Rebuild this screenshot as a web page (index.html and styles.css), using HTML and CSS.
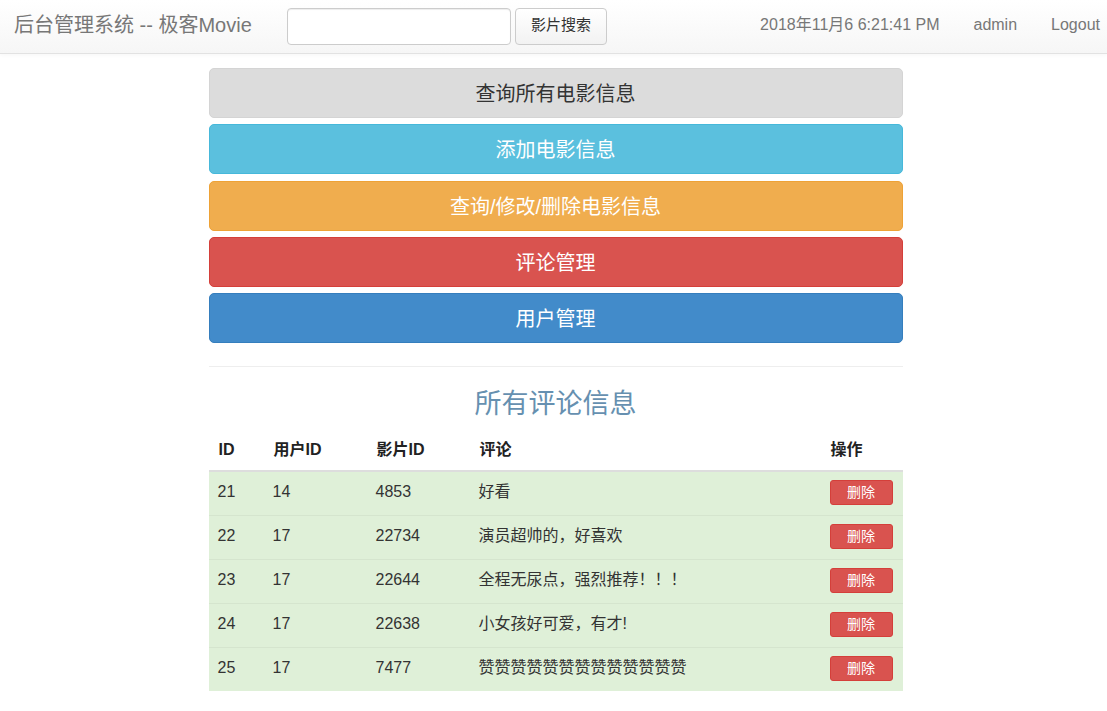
FILE: index.html
```html
<!DOCTYPE html>
<html lang="zh">
<head>
<meta charset="utf-8">
<title>后台管理系统</title>
<link rel="stylesheet" href="styles.css">
</head>
<body>
<nav class="navbar">
  <div class="brand">后台管理系统 -- 极客Movie</div>
  <form class="search">
    <input class="search-input" type="text">
    <button class="search-btn" type="button">影片搜索</button>
  </form>
  <div class="nav-right">
    <span class="nav-item">2018年11月6 6:21:41 PM</span>
    <span class="nav-item">admin</span>
    <span class="nav-item">Logout</span>
  </div>
</nav>
<main class="main">
  <div class="menu">
    <button class="big-btn btn-default">查询所有电影信息</button>
    <button class="big-btn btn-info">添加电影信息</button>
    <button class="big-btn btn-warning">查询/修改/删除电影信息</button>
    <button class="big-btn btn-danger">评论管理</button>
    <button class="big-btn btn-primary">用户管理</button>
  </div>
  <hr class="divider">
  <h2 class="title">所有评论信息</h2>
  <table class="table">
    <thead>
      <tr><th class="c1">ID</th><th class="c2">用户ID</th><th class="c3">影片ID</th><th class="c4">评论</th><th class="c5">操作</th></tr>
    </thead>
    <tbody>
      <tr><td>21</td><td>14</td><td>4853</td><td>好看</td><td><button class="del">删除</button></td></tr>
      <tr><td>22</td><td>17</td><td>22734</td><td>演员超帅的，好喜欢</td><td><button class="del">删除</button></td></tr>
      <tr><td>23</td><td>17</td><td>22644</td><td>全程无尿点，强烈推荐！！！</td><td><button class="del">删除</button></td></tr>
      <tr><td>24</td><td>17</td><td>22638</td><td>小女孩好可爱，有才!</td><td><button class="del">删除</button></td></tr>
      <tr><td>25</td><td>17</td><td>7477</td><td>赞赞赞赞赞赞赞赞赞赞赞赞赞</td><td><button class="del">删除</button></td></tr>
    </tbody>
  </table>
</main>
</body>
</html>
```
FILE: styles.css
```css
* { box-sizing: border-box; }
html, body { margin: 0; padding: 0; }
body {
  font-family: "Liberation Sans", Arial, "Noto Sans CJK SC", sans-serif;
  font-size: 15px;
  color: #333;
  background: #fff;
}
.navbar {
  display: flex;
  align-items: center;
  height: 54px;
  padding: 0 7px 0 14px;
  background: linear-gradient(to bottom, #ffffff 0%, #f6f6f6 100%);
  border-bottom: 1px solid #e2e2e2;
  box-shadow: 0 1px 4px rgba(0,0,0,0.04);
}
.brand {
  font-size: 20px;
  line-height: 24px;
  color: #777;
  width: 273px;
  white-space: nowrap;
  margin-bottom: 4px;
}
.search { display: flex; gap: 4px; margin: 0; }
.search-input {
  width: 224px;
  height: 37px;
  border: 1px solid #ccc;
  border-radius: 4px;
  box-shadow: inset 0 1px 1px rgba(0,0,0,0.075);
  background: #fff;
}
.search-btn {
  width: 92px;
  height: 37px;
  border: 1px solid #ccc;
  border-radius: 4px;
  background: linear-gradient(to bottom, #fff 0%, #f2f2f2 100%);
  font-family: "Liberation Sans", "Noto Sans CJK SC", sans-serif;
  font-size: 15px;
  line-height: 20px;
  color: #333;
  padding: 0 0 3px;
}
.nav-right {
  margin-left: auto;
  display: flex;
  align-items: center;
  gap: 34px;
  color: #777;
  font-size: 16px;
  line-height: 20px;
  margin-bottom: 3px;
}
.nav-item { display: block; line-height: 20px; }
.main {
  width: 694px;
  margin: 0 0 0 calc(50% - 345px);
  padding-top: 14px;
}
.menu { display: flex; flex-direction: column; gap: 6.3px; }
.big-btn {
  display: block;
  width: 100%;
  height: 50px;
  border: 1px solid transparent;
  border-radius: 5px;
  font-family: "Liberation Sans", "Noto Sans CJK SC", sans-serif;
  font-size: 20px;
  line-height: 24px;
  color: #fff;
  padding: 2px 0 0;
}
.btn-default { background: #dcdcdc; border-color: #d4d4d4; color: #333; }
.btn-info { background: #5bc0de; border-color: #46b8da; }
.btn-warning { background: #f0ad4e; border-color: #eea236; }
.btn-danger { background: #d9534f; border-color: #d43f3a; }
.btn-primary { background: #428bca; border-color: #357ebd; }
.divider {
  margin: 23px 0 0;
  border: 0;
  border-top: 1px solid #eee;
}
.title {
  margin: 19px 0 0;
  text-align: center;
  font-size: 27px;
  font-weight: normal;
  color: #6690b0;
  line-height: 36px;
}
.table {
  width: 100%;
  margin-top: 9px;
  border-collapse: collapse;
}
.table th {
  text-align: left;
  font-weight: bold;
  font-size: 16px;
  line-height: 20px;
  color: #222;
  height: 40px;
  padding: 0 10px 2px;
  border-bottom: 2px solid #ddd;
}
.table td {
  height: 44px;
  padding: 0 9px 2px;
  background: #dff0d8;
  border-top: 1px solid #d5e5ce;
  font-size: 16px;
  line-height: 20px;
  color: #333;
}
.table tbody tr:first-child td { border-top: 0; }
.c1 { width: 55px; }
.c2 { width: 103px; }
.c3 { width: 103px; }
.c5 { width: 82px; }
.del {
  width: 63px;
  height: 25px;
  padding: 0;
  border: 1px solid #d43f3a;
  border-radius: 3px;
  background: #d9534f;
  color: #fff;
  font-family: "Liberation Sans", "Noto Sans CJK SC", sans-serif;
  font-size: 14px;
  line-height: 18px;
  vertical-align: middle;
}
```
